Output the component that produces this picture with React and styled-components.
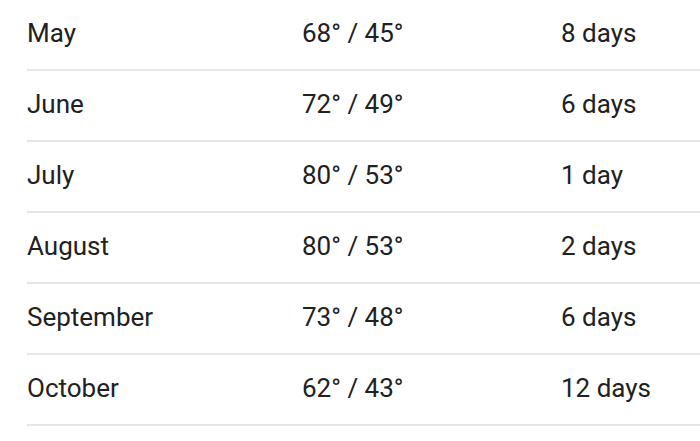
import React from 'react';
import styled, { createGlobalStyle } from 'styled-components';

const GlobalStyle = createGlobalStyle`
  html, body {
    margin: 0;
    padding: 0;
    background: #ffffff;
  }
  body {
    font-family: Roboto, "Noto Sans", "Liberation Sans", sans-serif;
    overflow: hidden;
  }
`;

const rows = [
  { month: 'May', temp: '68° / 45°', rain: '8 days' },
  { month: 'June', temp: '72° / 49°', rain: '6 days' },
  { month: 'July', temp: '80° / 53°', rain: '1 day' },
  { month: 'August', temp: '80° / 53°', rain: '2 days' },
  { month: 'September', temp: '73° / 48°', rain: '6 days' },
  { month: 'October', temp: '62° / 43°', rain: '12 days' },
];

const App = () => (
  <>
    <GlobalStyle />
    <Page>
      <Table>
        {rows.map(r => (
          <Row key={r.month}>
            <Cell $width="275px">{r.month}</Cell>
            <Cell $width="259px">{r.temp}</Cell>
            <Cell>{r.rain}</Cell>
          </Row>
        ))}
      </Table>
    </Page>
  </>
);

const Page = styled.div`
  width: 700px;
  height: 441px;
  padding-left: 27px;
  box-sizing: border-box;
  overflow: hidden;
`;

const Table = styled.div`
  display: flex;
  flex-direction: column;
`;

const Row = styled.div`
  display: flex;
  align-items: center;
  height: 69px;
  border-bottom: 2px solid #e6e6e6;
`;

const Cell = styled.div`
  width: ${p => p.$width || 'auto'};
  flex: ${p => (p.$width ? 'none' : '1')};
  font-size: 26px;
  color: #212121;
  line-height: 1;
  margin-top: -3px;
  white-space: nowrap;
`;

export default App;
